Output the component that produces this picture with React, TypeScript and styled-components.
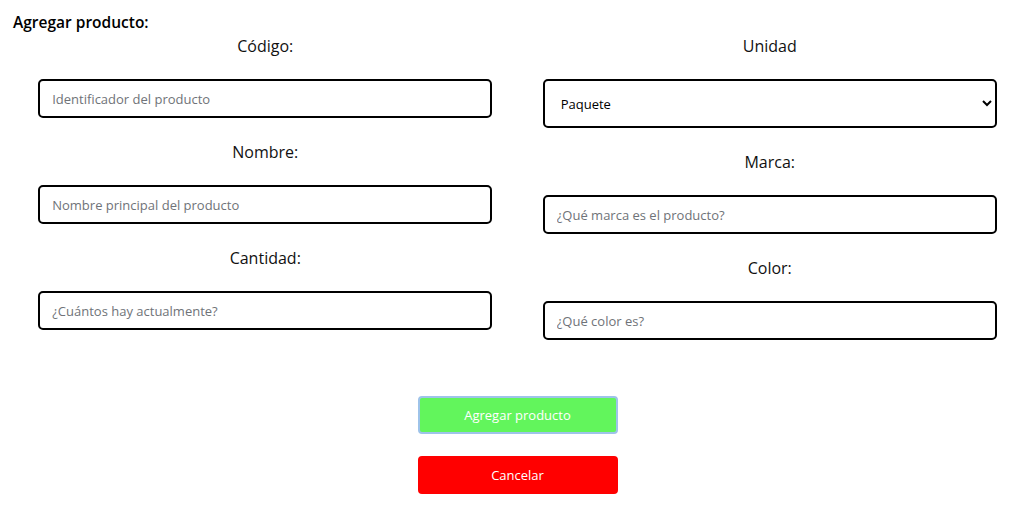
import styled, { createGlobalStyle } from 'styled-components'

const GlobalStyle = createGlobalStyle`
  body {
    margin: 0;
    background: #fff;
    font-family: "Open Sans", "Liberation Sans", sans-serif;
    color: #111;
  }
`

type Field = {
  label: string
  placeholder?: string
  select?: string[]
}

const leftFields: Field[] = [
  { label: 'Código:', placeholder: 'Identificador del producto' },
  { label: 'Nombre:', placeholder: 'Nombre principal del producto' },
  { label: 'Cantidad:', placeholder: '¿Cuántos hay actualmente?' },
]

const rightFields: Field[] = [
  { label: 'Unidad', select: ['Paquete', 'Pieza', 'Caja', 'Kilogramo'] },
  { label: 'Marca:', placeholder: '¿Qué marca es el producto?' },
  { label: 'Color:', placeholder: '¿Qué color es?' },
]

function FieldGroup({ field }: { field: Field }) {
  return (
    <Group>
      <Label>{field.label}</Label>
      {field.select ? (
        <Select defaultValue={field.select[0]}>
          {field.select.map((opt) => (
            <option key={opt}>{opt}</option>
          ))}
        </Select>
      ) : (
        <Input type="text" placeholder={field.placeholder} />
      )}
    </Group>
  )
}

export default function App() {
  return (
    <>
      <GlobalStyle />
      <Page>
        <Title>Agregar producto:</Title>
        <Columns>
          <Column>
            {leftFields.map((f) => (
              <FieldGroup key={f.label} field={f} />
            ))}
          </Column>
          <Column>
            {rightFields.map((f) => (
              <FieldGroup key={f.label} field={f} />
            ))}
          </Column>
        </Columns>
        <Actions>
          <Button type="button" $variant="primary">
            Agregar producto
          </Button>
          <Button type="button" $variant="danger">
            Cancelar
          </Button>
        </Actions>
      </Page>
    </>
  )
}

const Page = styled.div`
  padding: 12px 12px 14px 13px;
`

const Title = styled.h3`
  margin: 0;
  font-size: 15.5px;
  font-weight: 600;
  line-height: 21px;
  color: #000;
`

const Columns = styled.div`
  display: grid;
  grid-template-columns: 1fr 1fr;
  align-items: start;
  margin-top: 2px;
`

const Column = styled.div`
  display: flex;
  flex-direction: column;
  align-items: center;
`

const Group = styled.div`
  width: 90%;
  display: flex;
  flex-direction: column;
  align-items: center;
  padding-bottom: 23px;
`

const Label = styled.label`
  font-size: 16px;
  line-height: 22px;
  color: #111;
  margin-bottom: 22px;
`

const Input = styled.input`
  box-sizing: border-box;
  width: 100%;
  height: 39px;
  border: 2px solid #000;
  border-radius: 5px;
  padding: 0 12px;
  font-family: inherit;
  font-size: 13px;
  color: #111;
  background: #fff;

  &::placeholder {
    color: #6f7378;
  }
`

const Select = styled.select`
  box-sizing: border-box;
  width: 100%;
  height: 49px;
  border: 2px solid #000;
  border-radius: 5px;
  padding: 0 4px 0 12px;
  font-family: inherit;
  font-size: 13px;
  color: #000;
  background: #fff;
`

const Actions = styled.div`
  display: flex;
  flex-direction: column;
  align-items: center;
  gap: 22px;
  margin-top: 33px;
`

const Button = styled.button<{ $variant: 'primary' | 'danger' }>`
  box-sizing: border-box;
  width: 200px;
  height: 38px;
  border-radius: 4px;
  border: 2px solid ${({ $variant }) => ($variant === 'primary' ? '#9ec3e9' : '#ff0000')};
  background: ${({ $variant }) => ($variant === 'primary' ? '#62f55c' : '#ff0000')};
  color: #fff;
  font-family: inherit;
  font-size: 13px;
  cursor: pointer;
`
